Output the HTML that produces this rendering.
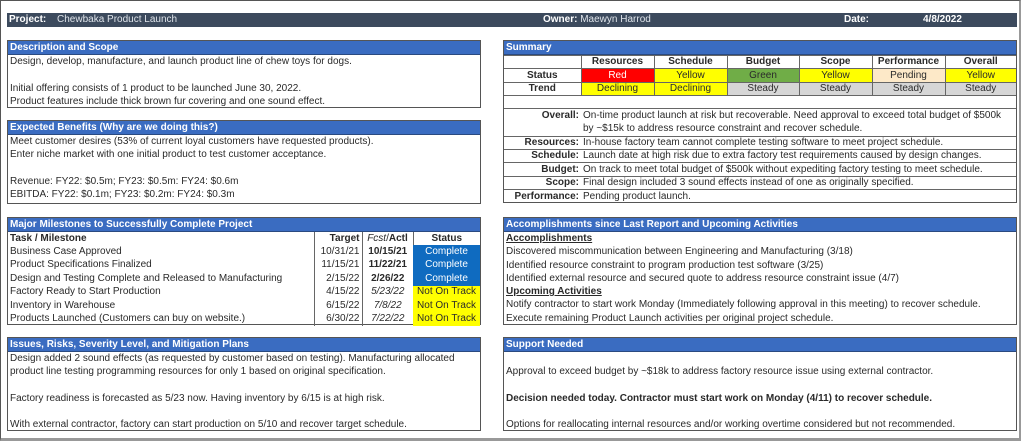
<!DOCTYPE html>
<html><head><meta charset="utf-8"><style>
*{margin:0;padding:0;box-sizing:border-box}
body{width:1024px;height:446px;background:#fff;font-family:"Liberation Sans",Arial,sans-serif;font-size:10px;color:#2a2a2a;position:relative;overflow:hidden}
.frame{position:absolute;left:0;top:0;width:1021px;height:441px;border:1px solid #555;border-right:2px solid #999;border-bottom:3px solid #999}
.bar{position:absolute;left:7px;top:13px;width:1010px;height:14px;background:#3c4a5d;color:#dfe4ea;line-height:14px;white-space:nowrap}
.bar b{color:#fff}
.abs{position:absolute}
.panel{position:absolute;border:1px solid #555}
.hd{background:#3a6cc1;color:#fff;font-weight:bold;height:14px;line-height:14px;padding-left:2px;border-bottom:1px solid #2a4a80;white-space:nowrap}
.ln{height:13.3px;line-height:13.3px;padding-left:2px;white-space:nowrap}
table{border-collapse:collapse;width:100%;table-layout:fixed}
td{height:13.4px;line-height:12px;white-space:nowrap;padding:0 2px;overflow:hidden}
.g td{border:1px solid #666;text-align:center}
.red{background:#ff0000;color:#fff}.yel{background:#ffff00}.grn{background:#70ad47}.pen{background:#fde9c8}.gry{background:#d6d6d6}
.blu{background:#0f6bc0;color:#fff;text-align:center}
.bl{border-left:1px solid #666}
</style></head><body>
<div class="frame"></div>
<div class="bar"><span class="abs" style="left:2px"><b>Project:</b></span><span class="abs" style="left:50px">Chewbaka Product Launch</span><span class="abs" style="left:536px"><b>Owner:</b> Maewyn Harrod</span><span class="abs" style="left:837px"><b>Date:</b></span><span class="abs" style="left:916px"><b>4/8/2022</b></span></div>

<div class="panel" style="left:7px;top:40px;width:474px;height:68px">
<div class="hd">Description and Scope</div>
<div class="ln">Design, develop, manufacture, and launch product line of chew toys for dogs.</div>
<div class="ln"></div>
<div class="ln">Initial offering consists of 1 product to be launched June 30, 2022.</div>
<div class="ln">Product features include thick brown fur covering and one sound effect.</div>
</div>

<div class="panel" style="left:7px;top:120px;width:474px;height:84px">
<div class="hd">Expected Benefits (Why are we doing this?)</div>
<div class="ln">Meet customer desires (53% of current loyal customers have requested products).</div>
<div class="ln">Enter niche market with one initial product to test customer acceptance.</div>
<div class="ln"></div>
<div class="ln">Revenue: FY22: $0.5m; FY23: $0.5m: FY24: $0.6m</div>
<div class="ln">EBITDA: FY22: $0.1m; FY23: $0.2m: FY24: $0.3m</div>
</div>

<div class="panel" style="left:7px;top:217px;width:474px;height:108px">
<div class="hd">Major Milestones to Successfully Complete Project</div>
<table>
<colgroup><col style="width:306px"><col style="width:48px"><col style="width:51px"><col></colgroup>
<tr><td><b>Task / Milestone</b></td><td class="bl" style="text-align:right"><b>Target</b></td><td class="bl" style="text-align:center"><i>Fcst</i>/<b>Actl</b></td><td class="bl" style="text-align:center"><b>Status</b></td></tr>
<tr><td>Business Case Approved</td><td class="bl" style="text-align:right">10/31/21</td><td class="bl" style="text-align:center"><b>10/15/21</b></td><td class="blu">Complete</td></tr>
<tr><td>Product Specifications Finalized</td><td class="bl" style="text-align:right">11/15/21</td><td class="bl" style="text-align:center"><b>11/22/21</b></td><td class="blu">Complete</td></tr>
<tr><td>Design and Testing Complete and Released to Manufacturing</td><td class="bl" style="text-align:right">2/15/22</td><td class="bl" style="text-align:center"><b>2/26/22</b></td><td class="blu">Complete</td></tr>
<tr><td>Factory Ready to Start Production</td><td class="bl" style="text-align:right">4/15/22</td><td class="bl" style="text-align:center"><i>5/23/22</i></td><td class="yel" style="text-align:center">Not On Track</td></tr>
<tr><td>Inventory in Warehouse</td><td class="bl" style="text-align:right">6/15/22</td><td class="bl" style="text-align:center"><i>7/8/22</i></td><td class="yel" style="text-align:center">Not On Track</td></tr>
<tr><td>Products Launched (Customers can buy on website.)</td><td class="bl" style="text-align:right">6/30/22</td><td class="bl" style="text-align:center"><i>7/22/22</i></td><td class="yel" style="text-align:center">Not On Track</td></tr>
</table>
</div>

<div class="panel" style="left:7px;top:337px;width:474px;height:94px">
<div class="hd">Issues, Risks, Severity Level, and Mitigation Plans</div>
<div class="ln">Design added 2 sound effects (as requested by customer based on testing). Manufacturing allocated</div>
<div class="ln">product line testing programming resources for only 1 based on original specification.</div>
<div class="ln"></div>
<div class="ln">Factory readiness is forecasted as 5/23 now. Having inventory by 6/15 is at high risk.</div>
<div class="ln"></div>
<div class="ln">With external contractor, factory can start production on 5/10 and recover target schedule.</div>
</div>

<div class="panel" style="left:503px;top:40px;width:514px;height:163px">
<div class="hd">Summary</div>
<table class="g">
<colgroup><col style="width:77px"><col style="width:73px"><col style="width:73px"><col style="width:72px"><col style="width:73px"><col style="width:73px"><col></colgroup>
<tr><td style="border-left:0"></td><td><b>Resources</b></td><td><b>Schedule</b></td><td><b>Budget</b></td><td><b>Scope</b></td><td><b>Performance</b></td><td style="border-right:0"><b>Overall</b></td></tr>
<tr><td style="border-left:0"><b>Status</b></td><td class="red">Red</td><td class="yel">Yellow</td><td class="grn">Green</td><td class="yel">Yellow</td><td class="pen">Pending</td><td class="yel" style="border-right:0">Yellow</td></tr>
<tr><td style="border-left:0"><b>Trend</b></td><td class="yel">Declining</td><td class="yel">Declining</td><td class="gry">Steady</td><td class="gry">Steady</td><td class="gry">Steady</td><td class="gry" style="border-right:0">Steady</td></tr>
</table>
<div style="height:13px;border-bottom:1px solid #666"></div>
<table style="border-collapse:collapse">
<colgroup><col style="width:77px"><col></colgroup>
<tr style="border-bottom:1px solid #666"><td style="text-align:right;vertical-align:top;height:27px;line-height:13px"><b>Overall:</b></td><td style="line-height:13px">On-time product launch at risk but recoverable. Need approval to exceed total budget of $500k<br>by ~$15k to address resource constraint and recover schedule.</td></tr>
<tr style="border-bottom:1px solid #666"><td style="text-align:right"><b>Resources:</b></td><td>In-house factory team cannot complete testing software to meet project schedule.</td></tr>
<tr style="border-bottom:1px solid #666"><td style="text-align:right"><b>Schedule:</b></td><td>Launch date at high risk due to extra factory test requirements caused by design changes.</td></tr>
<tr style="border-bottom:1px solid #666"><td style="text-align:right"><b>Budget:</b></td><td>On track to meet total budget of $500k without expediting factory testing to meet schedule.</td></tr>
<tr style="border-bottom:1px solid #666"><td style="text-align:right"><b>Scope:</b></td><td>Final design included 3 sound effects instead of one as originally specified.</td></tr>
<tr><td style="text-align:right"><b>Performance:</b></td><td>Pending product launch.</td></tr>
</table>
</div>

<div class="panel" style="left:503px;top:217px;width:514px;height:108px">
<div class="hd">Accomplishments since Last Report and Upcoming Activities</div>
<div class="ln"><b><u>Accomplishments</u></b></div>
<div class="ln">Discovered miscommunication between Engineering and Manufacturing (3/18)</div>
<div class="ln">Identified resource constraint to program production test software (3/25)</div>
<div class="ln">Identified external resource and secured quote to address resource constraint issue (4/7)</div>
<div class="ln"><b><u>Upcoming Activities</u></b></div>
<div class="ln">Notify contractor to start work Monday (Immediately following approval in this meeting) to recover schedule.</div>
<div class="ln">Execute remaining Product Launch activities per original project schedule.</div>
</div>

<div class="panel" style="left:503px;top:337px;width:514px;height:94px">
<div class="hd">Support Needed</div>
<div class="ln"></div>
<div class="ln">Approval to exceed budget by ~$18k to address factory resource issue using external contractor.</div>
<div class="ln"></div>
<div class="ln"><b>Decision needed today. Contractor must start work on Monday (4/11) to recover schedule.</b></div>
<div class="ln"></div>
<div class="ln">Options for reallocating internal resources and/or working overtime considered but not recommended.</div>
</div>
</body></html>
